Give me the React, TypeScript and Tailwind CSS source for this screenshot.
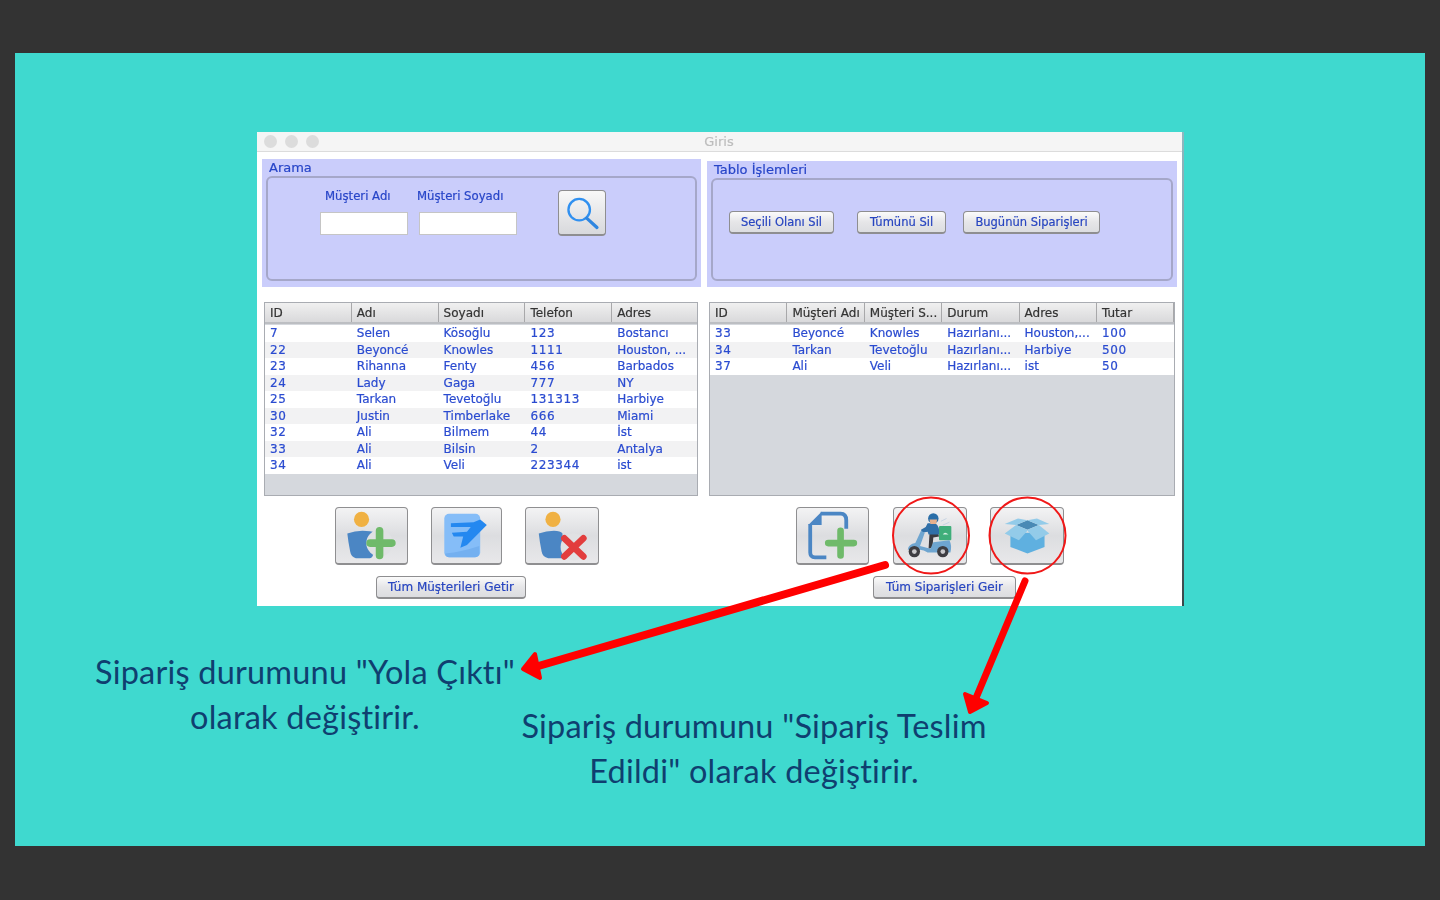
const customers = [
  ['7', 'Selen', 'Kösoğlu', '123', 'Bostancı'],
  ['22', 'Beyoncé', 'Knowles', '1111', 'Houston, ...'],
  ['23', 'Rihanna', 'Fenty', '456', 'Barbados'],
  ['24', 'Lady', 'Gaga', '777', 'NY'],
  ['25', 'Tarkan', 'Tevetoğlu', '131313', 'Harbiye'],
  ['30', 'Justin', 'Timberlake', '666', 'Miami'],
  ['32', 'Ali', 'Bilmem', '44', 'İst'],
  ['33', 'Ali', 'Bilsin', '2', 'Antalya'],
  ['34', 'Ali', 'Veli', '223344', 'ist'],
];

const orders = [
  ['33', 'Beyoncé', 'Knowles', 'Hazırlanı...', 'Houston,...', '100'],
  ['34', 'Tarkan', 'Tevetoğlu', 'Hazırlanı...', 'Harbiye', '500'],
  ['37', 'Ali', 'Veli', 'Hazırlanı...', 'ist', '50'],
];

function DataTable({ headers, rows, cols, width }: { headers: string[]; rows: string[][]; cols: string; width: string }) {
  return (
    <div className={`${width} h-[194px] border border-[#a9acb2] bg-[#d5d8dd] flex flex-col overflow-hidden`}>
      <div className={`grid ${cols} h-[21px] border-b-2 border-[#bcbec2] bg-gradient-to-b from-[#f0f0f0] to-[#d9d9db]`}>
        {headers.map((h, i) => (
          <div key={i} className="pl-[5px] border-r border-[#a8a8aa] text-[#333] leading-[20px] whitespace-nowrap overflow-hidden">
            {h}
          </div>
        ))}
      </div>
      <div className="mt-px">
        {rows.map((row, i) => (
          <div key={i} className={`grid ${cols} h-[16.5px] leading-[16.5px] text-[#2a4bd0] ${i % 2 ? 'bg-[#f2f2f3]' : 'bg-white'}`}>
            {row.map((c, j) => (
              <div key={j} className={`pl-[5px] whitespace-nowrap overflow-hidden ${/^\d+$/.test(c) ? 'tracking-[0.65px]' : ''}`}>
                {c}
              </div>
            ))}
          </div>
        ))}
      </div>
    </div>
  );
}

function TextButton({ label, width }: { label: string; width: string }) {
  return (
    <button className={`${width} h-[23px] rounded-[4px] border border-[#8e8e90] border-b-2 bg-gradient-to-b from-[#fbfbfb] via-[#e6e6e8] to-[#dcdde0] text-[#2745c0] text-center leading-[20px] whitespace-nowrap`}>
      {label}
    </button>
  );
}

function IconButton({ width, children }: { width: string; children: React.ReactNode }) {
  return (
    <button className={`${width} h-[58px] rounded-[4px] border border-[#8f8f91] border-b-2 bg-gradient-to-b from-[#f3f3f4] via-[#dcdde0] to-[#e8e8ea] shrink-0`}>
      {children}
    </button>
  );
}

function Icon({ children }: { children: React.ReactNode }) {
  return (
    <svg viewBox="0 0 73 58" className="w-full h-full">
      {children}
    </svg>
  );
}

function AddUserIcon() {
  return (
    <Icon>
      <circle cx="26" cy="12" r="8" fill="#f0b143" />
      <path d="M11 27 Q19 24 27 24 Q36 24 40 26 L38 50 Q37 53 33 53 L20 53 Q15 52 14 46 Q12 36 11 27Z" fill="#4b86c4" />
      <circle cx="45" cy="37" r="14" fill="#e0e1e3" />
      <path d="M35 37 H58 M45 24 V50" stroke="#6fba6a" strokeWidth="8" strokeLinecap="round" />
    </Icon>
  );
}

function NoteIcon() {
  return (
    <Icon>
      <rect x="13" y="6" width="38" height="46" rx="5" fill="#85bdf8" />
      <path d="M14 48 Q32 46 50 40 V47 Q50 52 45 52 H18 Q14 52 14 48Z" fill="#74b0f0" />
      <path d="M20 16 L44 15 L51 12 L58 18 L37 39 L30 42 L33 30 L23 30 L21 26 L37 25 L41 20 L20 20Z" fill="#2488f0" />
    </Icon>
  );
}

function RemoveUserIcon() {
  return (
    <Icon>
      <circle cx="27" cy="12" r="8" fill="#f0b143" />
      <path d="M12 27 Q20 24 28 24 Q35 24 37 27 L37 53 L22 53 Q16 52 15 46 Q13 36 12 27Z" fill="#4b86c4" />
      <circle cx="49" cy="41" r="14" fill="#e0e1e3" />
      <path d="M39 32 L59 51 M59 32 L39 51" stroke="#e23d3d" strokeWidth="7" strokeLinecap="round" />
    </Icon>
  );
}

function AddFileIcon() {
  return (
    <Icon>
      <path d="M24 6 H45 Q51 6 51 13 V22 M13 17 V47 Q13 52 18 52 H30" fill="none" stroke="#4b86c4" strokeWidth="4" strokeLinejoin="round" />
      <path d="M11 18 L25 4 V18Z" fill="#4b86c4" />
      <path d="M32 37 H59 M45 24 V50" stroke="#6fba6a" strokeWidth="7" strokeLinecap="round" />
    </Icon>
  );
}

function ScooterIcon() {
  return (
    <Icon>
      <path d="M48 14 L54 11 M50 18 L57 15" stroke="#c6d4e2" strokeWidth="1" />
      <rect x="46" y="19" width="13" height="15" rx="1" fill="#3fae7a" />
      <path d="M50 28 Q52 24 56 28Z" fill="#d7efe3" />
      <path d="M35 43 L39 42 L40 31 L46 30 L45 26 L36 27Z" fill="#3a3a40" />
      <path d="M27 23 L32 20 L34 16 L42 16 Q47 19 46 28 L35 28 L34 25 L28 26Z" fill="#2f6fa8" />
      <circle cx="40" cy="11" r="5.5" fill="#2a6ea8" />
      <path d="M36 12 L44 12 L43 17 L37 17Z" fill="#e6b08d" />
      <path d="M27 24 L31 26 L26 40 L37 43 L40 36 L57 34 Q60 40 58 47 L34 47 Q30 44 26 44 Q18 43 13 44 Q14 38 21 37Z" fill="#6ea5d0" />
      <circle cx="20" cy="46" r="6" fill="#3d3d42" />
      <circle cx="20" cy="46" r="2.5" fill="#c9c9cc" />
      <circle cx="50" cy="46" r="6" fill="#3d3d42" />
      <circle cx="50" cy="46" r="2.5" fill="#c9c9cc" />
    </Icon>
  );
}

function BoxIcon() {
  return (
    <Icon>
      <path d="M19 26 H55 V41 L37 48 L19 41Z" fill="#5fb0e0" />
      <path d="M25 18 L37 13 L49 18 L37 23Z" fill="#4a8ab5" />
      <path d="M13 17 L27 11 L37 13 L25 18Z" fill="#93cbe9" />
      <path d="M60 17 L47 11 L37 13 L49 18Z" fill="#93cbe9" />
      <path d="M13 27 L25 18 L37 23 L37 24 L28 34Z" fill="#93cbe9" />
      <path d="M60 27 L49 18 L37 23 L37 24 L46 34Z" fill="#93cbe9" />
    </Icon>
  );
}

export default function App() {
  return (
    <div className="w-[1440px] h-[900px] bg-[#333333] pt-[53px] pl-[15px] overflow-hidden font-['DejaVu_Sans',sans-serif]">
      <div className="relative w-[1410px] h-[793px] bg-[#3fd9cf] pt-[79px]">
        {/* window */}
        <div className="relative ml-[242px] w-[926px] h-[474px] bg-white text-[12px] blur-[0.5px] [-webkit-text-stroke:0.2px]">
          <div className="h-[20px] bg-[#f5f5f5] border-b border-[#dcdcdc] flex items-center relative">
            <div className="flex gap-2 pl-[7px]">
              <span className="w-[13px] h-[13px] rounded-full bg-[#dcdcdc]" />
              <span className="w-[13px] h-[13px] rounded-full bg-[#dcdcdc]" />
              <span className="w-[13px] h-[13px] rounded-full bg-[#dcdcdc]" />
            </div>
            <span className="flex-1 text-center text-[13px] text-[#bdbdbd] pr-[64px]">Giris</span>
          </div>

          <div className="flex items-end gap-[6px] pl-[5px] h-[135px]">
            <div className="w-[439px] h-[128px] bg-[#cacdfb] px-[4px] text-[#2745c8]">
              <div className="text-[13px] leading-[16px] pl-[3px] mt-px">Arama</div>
              <div className="h-[105px] border-2 border-[#a5a7c9] rounded-[6px] pl-[52px] flex">
                <div className="w-[88px]">
                  <div className="h-[34px] pt-[10px] pl-[5px] text-[11.7px] leading-[16px] whitespace-nowrap">Müşteri Adı</div>
                  <input readOnly className="w-[88px] h-[23px] bg-white border border-[#c5c5c5] block" />
                </div>
                <div className="w-[98px] ml-[11px]">
                  <div className="h-[34px] pt-[10px] text-[11.7px] leading-[16px] whitespace-nowrap -ml-[2px]">Müşteri Soyadı</div>
                  <input readOnly className="w-[98px] h-[23px] bg-white border border-[#c5c5c5] block" />
                </div>
                <button className="w-[48px] h-[46px] mt-[12px] ml-[41px] rounded-[4px] border border-[#8e8e90] border-b-2 bg-gradient-to-b from-[#f8f8f8] to-[#d8d9dc]">
                  <svg viewBox="0 0 48 46" className="w-full h-full">
                    <circle cx="21" cy="20" r="11.5" fill="none" stroke="#3090f0" strokeWidth="2.5" />
                    <path d="M29 29 L40 39" stroke="#2f86e0" strokeWidth="3.5" strokeLinecap="round" />
                  </svg>
                </button>
              </div>
            </div>

            <div className="w-[470px] h-[126px] bg-[#cacdfb] px-[4px] text-[#2745c8]">
              <div className="text-[13px] leading-[16px] pl-[3px] mt-px">Tablo İşlemleri</div>
              <div className="h-[103px] border-2 border-[#a5a7c9] rounded-[6px] pl-[16px] pt-[31px] flex items-start text-[11.5px]">
                <TextButton label="Seçili Olanı Sil" width="w-[105px]" />
                <div className="w-[23px]" />
                <TextButton label="Tümünü Sil" width="w-[89px]" />
                <div className="w-[17px]" />
                <TextButton label="Bugünün Siparişleri" width="w-[137px]" />
              </div>
            </div>
          </div>

          <div className="flex mt-[15px] pl-[7px] gap-[11px]">
            <DataTable
              headers={['ID', 'Adı', 'Soyadı', 'Telefon', 'Adres']}
              rows={customers}
              cols="grid-cols-[repeat(5,86.8px)]"
              width="w-[434px]"
            />
            <DataTable
              headers={['ID', 'Müşteri Adı', 'Müşteri S...', 'Durum', 'Adres', 'Tutar']}
              rows={orders}
              cols="grid-cols-[repeat(6,77.4px)]"
              width="w-[466px]"
            />
          </div>

          <div className="flex mt-[11px] pl-[78px]">
            <IconButton width="w-[73px]"><AddUserIcon /></IconButton>
            <div className="w-[23px]" />
            <IconButton width="w-[71px]"><NoteIcon /></IconButton>
            <div className="w-[23px]" />
            <IconButton width="w-[74px]"><RemoveUserIcon /></IconButton>
            <div className="w-[197px]" />
            <IconButton width="w-[73px]"><AddFileIcon /></IconButton>
            <div className="w-[24px]" />
            <IconButton width="w-[74px]"><ScooterIcon /></IconButton>
            <div className="w-[23px]" />
            <IconButton width="w-[74px]"><BoxIcon /></IconButton>
          </div>

          <div className="flex mt-[11px] pl-[119px]">
            <TextButton label="Tüm Müşterileri Getir" width="w-[150px]" />
            <div className="w-[347px]" />
            <TextButton label="Tüm Siparişleri Geir" width="w-[143px]" />
          </div>

          <div className="absolute right-[-1px] top-0 bottom-0 w-[2px] bg-gradient-to-b from-[#8fb8c0] via-[#6f8f93] to-[#39474a]" />
        </div>

        {/* captions */}
        <div className="flex items-start font-['Lato',sans-serif] text-[#0f3f70] text-[32.5px] leading-[44.5px] tracking-[0.2px] text-center whitespace-nowrap">
          <p className="ml-[80px] w-[420px] mt-[44px]">
            Sipariş durumunu "Yola Çıktı"
            <br />
            olarak değiştirir.
          </p>
          <p className="w-[478px] mt-[98px]">
            Sipariş durumunu "Sipariş Teslim
            <br />
            Edildi" olarak değiştirir.
          </p>
        </div>

        {/* red annotations */}
        <svg viewBox="15 53 1410 793" className="absolute inset-0 w-full h-full pointer-events-none">
          <circle cx="931" cy="535.5" r="38" fill="none" stroke="#f01818" strokeWidth="2" />
          <circle cx="1027.5" cy="535.5" r="38" fill="none" stroke="#f01818" strokeWidth="2" />
          <path d="M885 565 L535 667" stroke="#ff0000" strokeWidth="8" strokeLinecap="round" />
          <path d="M523 669 L535 654 L540 678Z" fill="#ff0000" stroke="#ff0000" strokeWidth="4" strokeLinejoin="round" />
          <path d="M1025 581 L976 698" stroke="#ff0000" strokeWidth="7" strokeLinecap="round" />
          <path d="M970 712 L965 694 L987 703Z" fill="#ff0000" stroke="#ff0000" strokeWidth="4" strokeLinejoin="round" />
        </svg>
      </div>
    </div>
  );
}
